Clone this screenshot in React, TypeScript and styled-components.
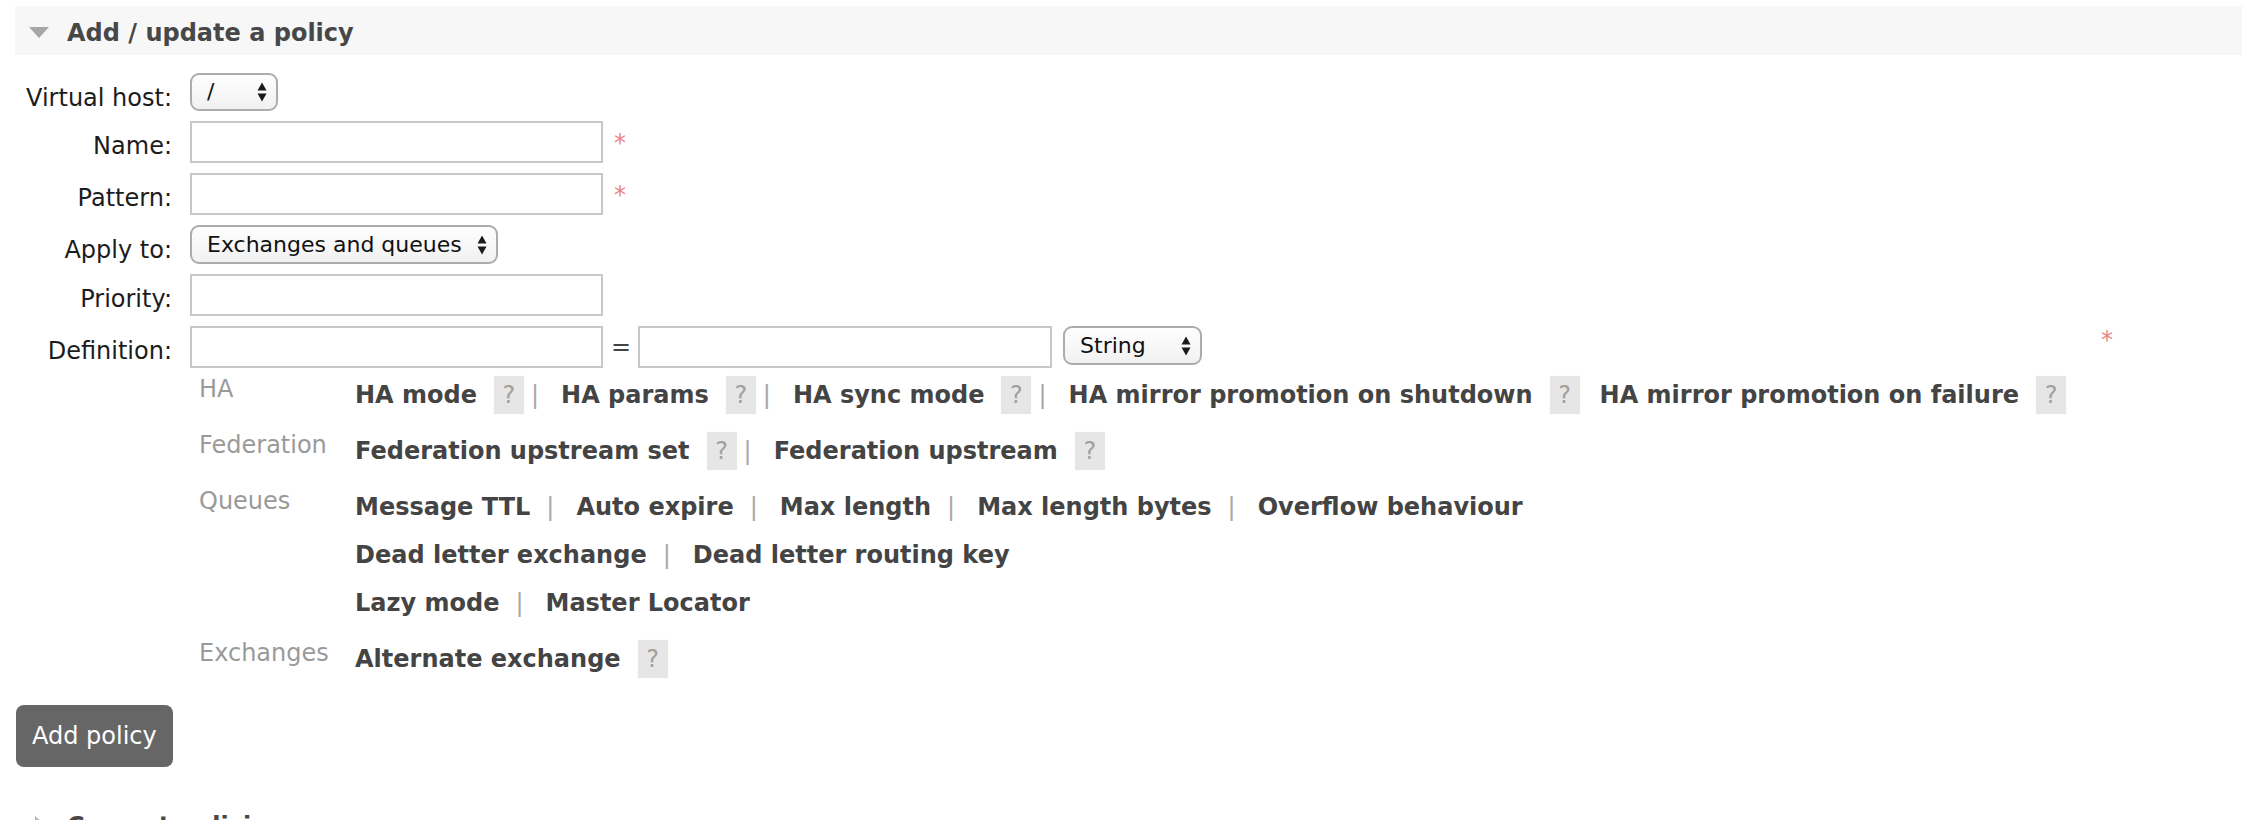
import React from "react";
import styled, { createGlobalStyle } from "styled-components";

const GlobalStyle = createGlobalStyle`
  html, body { margin: 0; padding: 0; background: #ffffff; }
  body {
    font-family: "DejaVu Sans", Verdana, sans-serif;
    font-size: 24px;
    color: #222222;
  }
  * { box-sizing: border-box; }
`;

const Page = styled.div`
  padding: 6px 0 0 15px;
`;

const SectionHeader = styled.h2<{ $gap?: number; $collapsed?: boolean }>`
  margin: ${(p) => p.$gap ?? 0}px 0 0 0;
  display: flex;
  align-items: flex-start;
  height: 49px;
  padding: 13px 0 8px 13px;
  background: ${(p) => (p.$collapsed ? "transparent" : "#f7f7f7")};
  font-size: 24px;
  line-height: 28px;
  font-weight: bold;
  color: #474747;
  white-space: nowrap;
`;

const Toggle = styled.svg`
  flex: none;
  width: 22px;
  height: 22px;
  margin: 3px 17px 0 0;
`;

const Form = styled.div`
  display: flex;
  flex-direction: column;
  gap: 10px;
  margin-top: 18px;
`;

const FormRow = styled.div`
  display: flex;
  align-items: flex-start;
`;

const Label = styled.label`
  flex: none;
  width: 157px;
  margin-right: 18px;
  padding-top: 13px;
  line-height: 24px;
  text-align: right;
  white-space: nowrap;
  color: #1c1c1c;
`;

const TextInput = styled.input<{ $w?: number }>`
  flex: none;
  width: ${(p) => p.$w ?? 413}px;
  height: 42px;
  margin: 0;
  padding: 0 6px;
  border: 2px solid #c8c8c8;
  border-radius: 0;
  background: #ffffff;
  font: inherit;
  outline: none;
`;

const Mand = styled.span<{ $top?: number; $left?: number }>`
  flex: none;
  padding-top: ${(p) => p.$top ?? 10}px;
  margin-left: ${(p) => p.$left ?? 11}px;
  line-height: 24px;
  color: #e98585;
`;

const SelectBox = styled.div<{ $w: number; $h?: number; $ml?: number }>`
  flex: none;
  display: flex;
  align-items: center;
  justify-content: space-between;
  width: ${(p) => p.$w}px;
  height: ${(p) => p.$h ?? 39}px;
  margin-left: ${(p) => p.$ml ?? 0}px;
  padding: 0 9px 0 15px;
  border: 2px solid #acacac;
  border-radius: 9px;
  background: linear-gradient(#fefefe, #f1f1f1);
  font-size: 22px;
  line-height: 26px;
  color: #111111;
  white-space: nowrap;
`;

const Arrows = styled.svg`
  flex: none;
  width: 10px;
  height: 20px;
`;

const DefField = styled.div`
  flex: none;
  display: flex;
  flex-direction: column;
`;

const DefInputs = styled.div`
  display: flex;
  align-items: flex-start;
`;

const Eq = styled.span`
  flex: none;
  margin: 0 7px 0 8px;
  line-height: 42px;
  color: #444444;
`;

const ArgTable = styled.div`
  display: grid;
  grid-template-columns: 156px auto;
  row-gap: 8px;
  margin: 3px 0 0 9px;
`;

const CatLabel = styled.div`
  line-height: 36px;
  color: #9a9a9a;
  white-space: nowrap;
`;

const LinkLines = styled.div`
  display: flex;
  flex-direction: column;
`;

const LinkLine = styled.div`
  line-height: 48px;
  white-space: nowrap;
`;

const ArgLink = styled.span<{ $ml?: number }>`
  margin-left: ${(p) => p.$ml ?? 0}px;
  font-weight: bold;
  color: #444444;
  cursor: pointer;
`;

const Help = styled.span`
  display: inline-block;
  width: 30px;
  height: 38px;
  margin-left: 17px;
  line-height: 38px;
  text-align: center;
  background: #e6e6e6;
  color: #a0a0a0;
  box-shadow: 0 0 1px rgba(0, 0, 0, 0.08);
`;

const Sep = styled.span<{ $afterHelp?: boolean }>`
  display: inline-block;
  margin: 0 22px 0 ${(p) => (p.$afterHelp ? 7 : 16)}px;
  color: #a8a8a8;
`;

const AddButton = styled.button`
  display: block;
  margin: 22px 0 0 1px;
  padding: 17px 16px;
  border: none;
  border-radius: 8px;
  background: #666666;
  color: #ffffff;
  font: inherit;
  font-size: 24px;
  line-height: 28px;
  cursor: pointer;
`;

type Item = { text: string; help?: boolean; sep?: boolean; ml?: number };
type Category = { name: string; lines: Item[][] };

const categories: Category[] = [
  {
    name: "HA",
    lines: [
      [
        { text: "HA mode", help: true },
        { text: "HA params", help: true, sep: true },
        { text: "HA sync mode", help: true, sep: true },
        { text: "HA mirror promotion on shutdown", help: true, sep: true },
        { text: "HA mirror promotion on failure", help: true, ml: 20 },
      ],
    ],
  },
  {
    name: "Federation",
    lines: [
      [
        { text: "Federation upstream set", help: true },
        { text: "Federation upstream", help: true, sep: true },
      ],
    ],
  },
  {
    name: "Queues",
    lines: [
      [
        { text: "Message TTL" },
        { text: "Auto expire", sep: true },
        { text: "Max length", sep: true },
        { text: "Max length bytes", sep: true },
        { text: "Overflow behaviour", sep: true },
      ],
      [
        { text: "Dead letter exchange" },
        { text: "Dead letter routing key", sep: true },
      ],
      [{ text: "Lazy mode" }, { text: "Master Locator", sep: true }],
    ],
  },
  {
    name: "Exchanges",
    lines: [[{ text: "Alternate exchange", help: true }]],
  },
];

const SelectArrows = () => (
  <Arrows viewBox="0 0 10 20">
    <path d="M0.5 8.5 L5 0.5 L9.5 8.5 Z" fill="#1a1a1a" />
    <path d="M0.5 11.5 L9.5 11.5 L5 19.5 Z" fill="#1a1a1a" />
  </Arrows>
);

const Select = ({ value, w, h, ml }: { value: string; w: number; h?: number; ml?: number }) => (
  <SelectBox $w={w} $h={h} $ml={ml}>
    <span>{value}</span>
    <SelectArrows />
  </SelectBox>
);

const LinkRow = ({ items }: { items: Item[] }) => {
  let prevHelp = false;
  return (
    <LinkLine>
      {items.map((it, i) => {
        const afterHelp = prevHelp;
        prevHelp = !!it.help;
        return (
          <React.Fragment key={i}>
            {it.sep && <Sep $afterHelp={afterHelp}>|</Sep>}
            <ArgLink $ml={it.ml}>{it.text}</ArgLink>
            {it.help && <Help>?</Help>}
          </React.Fragment>
        );
      })}
    </LinkLine>
  );
};

export default function App() {
  return (
    <>
      <GlobalStyle />
      <Page>
        <SectionHeader>
          <Toggle viewBox="0 0 22 22">
            <path d="M1 5 L21 5 L11 16 Z" fill="#a6a6a6" />
          </Toggle>
          Add / update a policy
        </SectionHeader>
        <Form>
          <FormRow>
            <Label>Virtual host:</Label>
            <Select value="/" w={88} h={38} />
          </FormRow>
          <FormRow>
            <Label>Name:</Label>
            <TextInput type="text" />
            <Mand>*</Mand>
          </FormRow>
          <FormRow>
            <Label>Pattern:</Label>
            <TextInput type="text" />
            <Mand>*</Mand>
          </FormRow>
          <FormRow>
            <Label>Apply to:</Label>
            <Select value="Exchanges and queues" w={308} />
          </FormRow>
          <FormRow>
            <Label>Priority:</Label>
            <TextInput type="text" />
          </FormRow>
          <FormRow>
            <Label>Definition:</Label>
            <DefField>
              <DefInputs>
                <TextInput type="text" />
                <Eq>=</Eq>
                <TextInput type="text" $w={414} />
                <Select value="String" w={139} ml={11} />
              </DefInputs>
              <ArgTable>
                {categories.map((c) => (
                  <React.Fragment key={c.name}>
                    <CatLabel>{c.name}</CatLabel>
                    <LinkLines>
                      {c.lines.map((line, i) => (
                        <LinkRow key={i} items={line} />
                      ))}
                    </LinkLines>
                  </React.Fragment>
                ))}
              </ArgTable>
            </DefField>
            <Mand $top={2} $left={35}>*</Mand>
          </FormRow>
        </Form>
        <AddButton>Add policy</AddButton>
        <SectionHeader $gap={32} $collapsed>
          <Toggle viewBox="0 0 22 22">
            <path d="M7 1 L18 11 L7 21 Z" fill="#b4b4b4" />
          </Toggle>
          Current policies
        </SectionHeader>
      </Page>
    </>
  );
}
